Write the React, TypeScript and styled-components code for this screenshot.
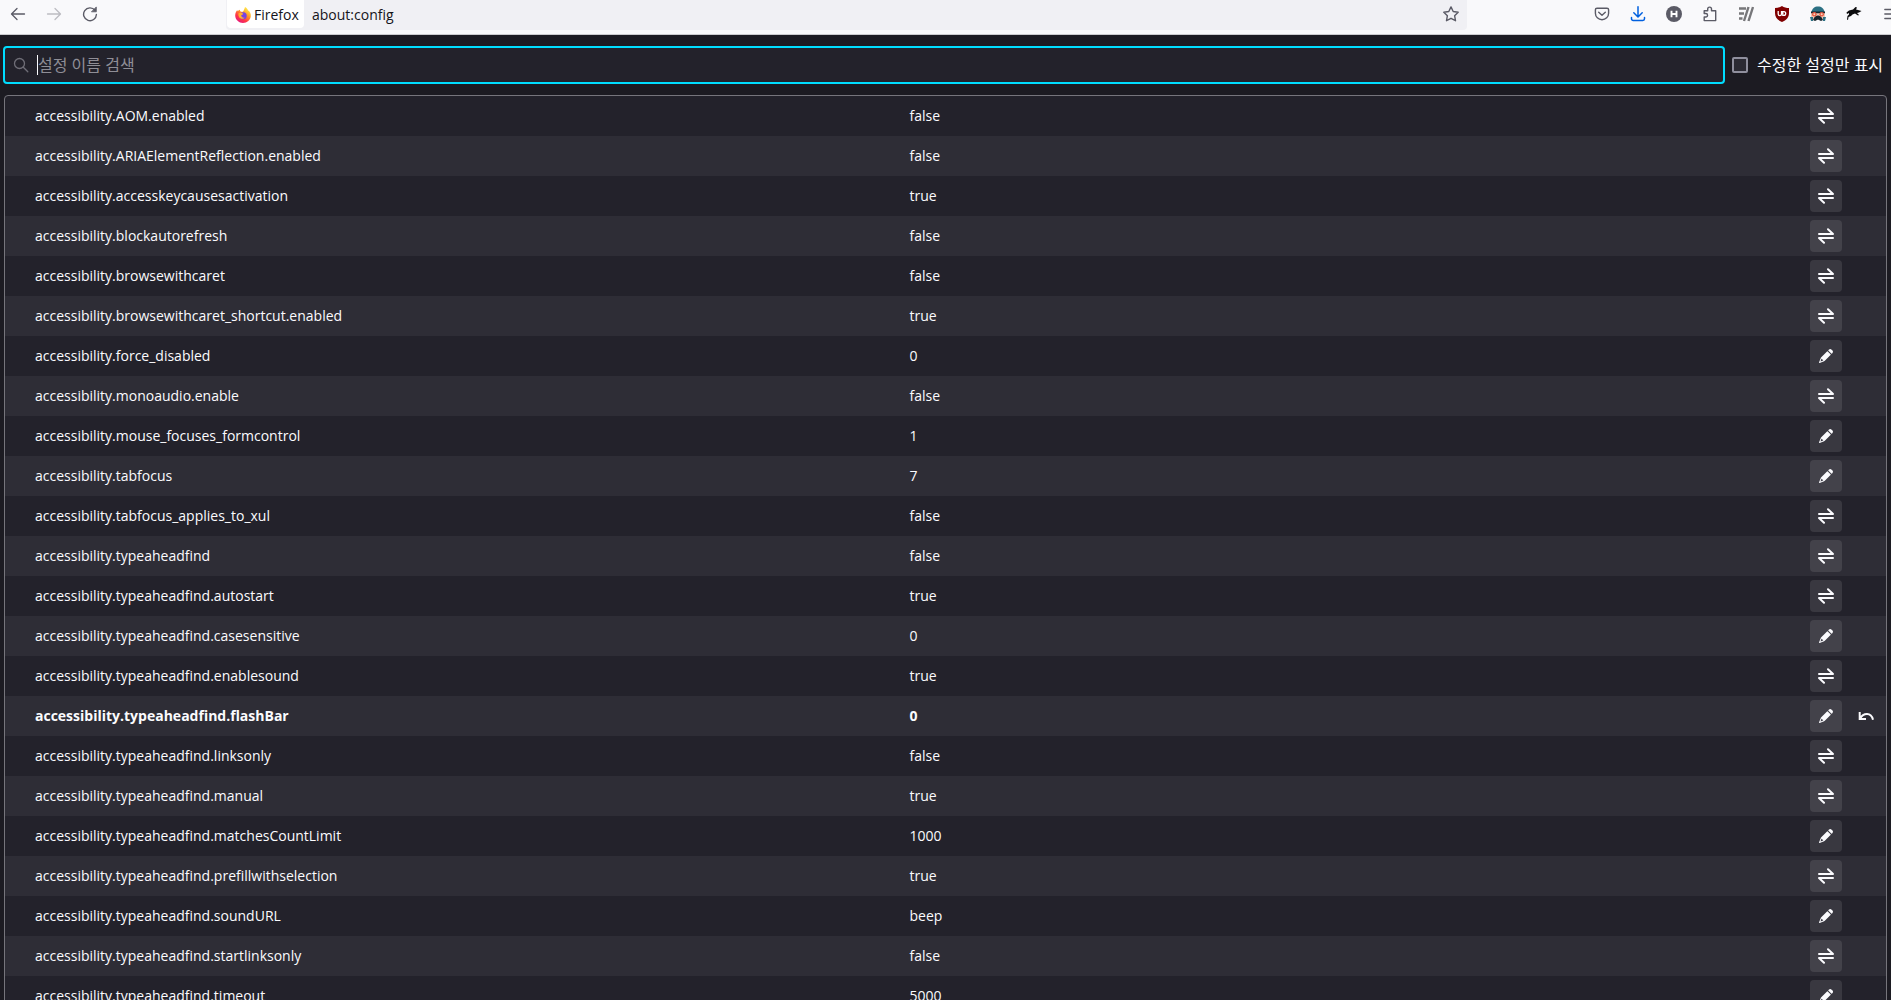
import React, { useState } from "react";
import styled, { createGlobalStyle } from "styled-components";

const GlobalStyle = createGlobalStyle`
  * { box-sizing: border-box; }
  body {
    margin: 0;
    background: #1c1b22;
    font-family: "Open Sans", "Noto Sans CJK KR", sans-serif;
  }
`;

const Page = styled.div`
  height: 100vh;
  overflow: hidden;
  color: #fbfbfe;
`;

const Toolbar = styled.header`
  display: flex;
  align-items: flex-start;
  height: 35px;
  background: #f9f9fb;
  border-bottom: 1px solid #cccccf;
  color: #5b5b66;
`;

const ToolGroup = styled.div`
  display: flex;
  flex: none;
`;

const ToolButton = styled.button<{ $color?: string }>`
  display: flex;
  align-items: center;
  justify-content: center;
  width: 36px;
  height: 28px;
  padding: 0;
  border: 0;
  background: none;
  color: ${(p) => p.$color ?? "inherit"};
  svg { display: block; flex: none; }
`;

const StarButton = styled(ToolButton)`
  width: 32px;
`;

const MenuButton = styled(ToolButton)`
  width: 19px;
  padding-left: 12px;
  justify-content: flex-start;
  overflow: hidden;
`;

const UrlBar = styled.div`
  display: flex;
  flex: 1;
  height: 30px;
  margin: 0 117px 0 118px;
  padding: 0 0 2px 1px;
  background: #f0f0f4;
  border-radius: 0 0 4px 4px;
`;

const Identity = styled.button`
  display: flex;
  align-items: center;
  gap: 3px;
  width: 77px;
  padding: 2px 0 0 8px;
  border: 0;
  border-radius: 0 0 4px 4px;
  background: #fff;
  color: #15141a;
  font: 14px/20px "Open Sans", sans-serif;
`;

const UrlInput = styled.input`
  flex: 1;
  min-width: 0;
  padding: 2px 0 0 8px;
  border: 0;
  outline: 0;
  background: none;
  color: #15141a;
  font: 14px/20px "Open Sans", sans-serif;
`;

const SearchRow = styled.div`
  display: flex;
  align-items: center;
  padding: 11px 4px 11px 3px;
`;

const SearchBox = styled.label`
  display: flex;
  align-items: center;
  flex: 1;
  height: 38px;
  padding-left: 8px;
  border: 2px solid #00ddff;
  border-radius: 4px;
  background: #23222b;
  color: #6f6e77;
`;

const Caret = styled.span`
  width: 1px;
  height: 20px;
  margin-left: 8px;
  background: #fbfbfe;
`;

const SearchInput = styled.input`
  flex: 1;
  min-width: 0;
  padding: 0;
  border: 0;
  outline: 0;
  background: none;
  color: #fbfbfe;
  font: 16px/24px "Open Sans", "Noto Sans CJK KR", sans-serif;
  &::placeholder { color: #8f8e96; opacity: 1; }
`;

const OnlyModified = styled.label`
  display: flex;
  align-items: center;
  gap: 9px;
  min-width: 155px;
  margin-left: 7px;
  font-size: 16px;
  line-height: 24px;
  white-space: nowrap;
`;

const Checkbox = styled.input`
  appearance: none;
  flex: none;
  width: 16px;
  height: 16px;
  margin: 0;
  border: 2px solid #8f8f9d;
  border-radius: 2px;
  background: #2b2a33;
  &:checked { background: #00ddff; }
`;

const TableFrame = styled.main`
  margin: 0 4px;
  border: 1px solid #76757c;
  border-radius: 4px;
  background: #23222b;
  overflow: hidden;
`;

const PrefTable = styled.table`
  width: 100%;
  table-layout: fixed;
  border-collapse: collapse;
  font-size: 14px;
  line-height: 20px;
`;

const ActionCol = styled.col`
  width: 40px;
`;

const PrefRow = styled.tr<{ $modified?: boolean }>`
  height: 40px;
  font-weight: ${(p) => (p.$modified ? 700 : 400)};
  &:nth-child(even) { background: #2e2d36; }
`;

const NameCell = styled.th`
  padding: 0 4px 0 30px;
  text-align: left;
  font-weight: inherit;
`;

const Cell = styled.td`
  padding: 0 4px;
`;

const RowButton = styled.button<{ $ghost?: boolean }>`
  display: flex;
  align-items: center;
  justify-content: center;
  width: 32px;
  height: 32px;
  padding: 0;
  border: 0;
  border-radius: 4px;
  background: ${(p) => (p.$ghost ? "transparent" : "rgba(251, 251, 254, 0.1)")};
  color: #fbfbfe;
`;

const line = { fill: "none", stroke: "currentColor", strokeLinecap: "round", strokeLinejoin: "round" } as const;

const ToggleIcon = () => (
  <svg width="16" height="16" viewBox="0 0 16 16" {...line} strokeWidth="2">
    <path d="M1 6h14L10 1.200M15 10H1l5 4.800" />
  </svg>
);
const EditIcon = () => (
  <svg width="16" height="16" viewBox="0 0 16 16" fill="currentColor">
    <path d="M14.354 2.353l-.708-.707a2.007 2.007 0 0 0-2.828 0l-.379.379a.5.5 0 0 0 0 .707l2.829 2.829a.5.5 0 0 0 .707 0l.379-.379a2.008 2.008 0 0 0 0-2.829zM9.732 3.439a.5.5 0 0 0-.707 0L3.246 9.218a1.986 1.986 0 0 0-.452.712l-1.756 4.39A.5.5 0 0 0 1.5 15a.49.49 0 0 0 .188-.037l4.382-1.752a1.966 1.966 0 0 0 .716-.454l5.779-5.778a.5.5 0 0 0 0-.707zM5.161 12.5l-2.549 1.02a.1.1 0 0 1-.13-.13L3.5 10.839a.1.1 0 0 1 .164-.033l1.53 1.53a.1.1 0 0 1-.033.164z" />
  </svg>
);
const ResetIcon = () => (
  <svg width="16" height="16" viewBox="0 0 16 16" fill="none" stroke="currentColor" strokeWidth="2">
    <path d="M1.700 4v7H8M2.200 10.500C5 5.200 13 3.500 15 11.800" />
  </svg>
);
const BackIcon = () => (
  <svg width="16" height="16" viewBox="0 0 16 16" {...line} strokeWidth="1.3">
    <path d="M14.500 8H1.800M7 2.500 1.500 8 7 13.500" />
  </svg>
);
const ForwardIcon = () => (
  <svg width="16" height="16" viewBox="0 0 16 16" {...line} strokeWidth="1.3">
    <path d="M1.500 8h12.700M9 2.500 14.500 8 9 13.500" />
  </svg>
);
const ReloadIcon = () => (
  <svg width="16" height="16" viewBox="0 0 16 16" {...line} strokeWidth="1.4">
    <path d="M13 4.300A6.400 6.400 0 1 0 14.400 8.500" />
    <path d="M14.300 1.300v4.500H9.800z" fill="currentColor" strokeWidth=".8" />
  </svg>
);
const FirefoxIcon = () => (
  <svg width="16" height="16" viewBox="0 0 16 16">
    <defs>
      <linearGradient id="flame" x1="0.85" y1="0" x2="0.2" y2="1">
        <stop offset="0.05" stopColor="#fff44f" />
        <stop offset="0.4" stopColor="#ff9a26" />
        <stop offset="0.7" stopColor="#ff3647" />
        <stop offset="1" stopColor="#e31587" />
      </linearGradient>
    </defs>
    <path fill="url(#flame)" d="M10 0c2 1 2.700 2.300 2.900 3.300C15 4.600 16 6.500 15.800 9 15.500 13 12 16 8 16S.2 12.700.2 8.500C.2 6 1.300 4.200 2.300 3c0 .6.200 1 .4 1.300C3.400 3.500 4.200 3 5 2.800c-.2.900.2 1.500.9 1.900h2C8.600 3.800 9.500 2.200 10 0z" />
    <circle cx="8.200" cy="8.700" r="3.500" fill="#7542e5" />
    <path fill="#ffb02e" d="M3.500 6.200c1.700-1 3.400-.6 4.800.5-.2.900-1.600 1-2.100 1.600 0 2 2 3 3.700 2.300-1.300 1.700-4.700 1.700-5.900-.6-.6-1.200-.8-2.500-.5-3.800z" />
  </svg>
);
const SearchIcon = () => (
  <svg width="16" height="16" viewBox="0 0 16 16" {...line} strokeWidth="1.3">
    <circle cx="6.500" cy="6.500" r="5" />
    <path d="m10.300 10.300 4.500 4.500" />
  </svg>
);
const StarIcon = () => (
  <svg width="16" height="16" viewBox="0 0 16 16" {...line} strokeWidth="1.4">
    <path d="m8 .9 2.200 4.600 5 .7-3.600 3.500.9 5L8 12.300l-4.500 2.400.9-5L.8 6.200l5-.7z" />
  </svg>
);
const PocketIcon = () => (
  <svg width="16" height="16" viewBox="0 0 16 16" {...line} strokeWidth="1.400">
    <path d="M3 2.200h10a1.600 1.600 0 0 1 1.600 1.600V7.200a6.600 6.600 0 0 1-13.200 0V3.800A1.600 1.600 0 0 1 3 2.200z" />
    <path d="m4.700 6.300 3.300 3 3.300-3" />
  </svg>
);
const DownloadIcon = () => (
  <svg width="16" height="16" viewBox="0 0 16 16" {...line} strokeWidth="1.500">
    <path d="M8 .8v10M3.800 6.800 8 11l4.200-4.200M1.500 11.500v1.300A1.700 1.700 0 0 0 3.200 14.500h9.600a1.700 1.700 0 0 0 1.700-1.700v-1.300" />
  </svg>
);
const AccountIcon = () => (
  <svg width="16" height="16" viewBox="0 0 16 16">
    <circle cx="8" cy="8" r="8" fill="#5b5b66" />
    <path d="M5.500 4.700v6.600M10.500 4.700v6.600M5.500 8h5" stroke="#fff" strokeWidth="1.900" />
  </svg>
);
const ExtensionsIcon = () => (
  <svg width="16" height="16" viewBox="0 0 16 16" {...line} strokeWidth="1.400">
    <path d="M2.200 14.600V11h1.600a1.700 1.700 0 0 0 0-3.500H2.200V4.700h3.500V3a1.900 1.900 0 0 1 3.800 0v1.700h4.200v9.900z" />
  </svg>
);
const SlashesIcon = () => (
  <svg width="16" height="16" viewBox="0 0 16 16" fill="none" stroke="#77777a" strokeWidth="2.400">
    <path d="M1 2.500h7M1 7.500h5M1 12.500h3.500M10.500 1 6 15M15 1l-4.500 14" />
  </svg>
);
const ShieldIcon = () => (
  <svg width="16" height="16" viewBox="0 0 16 16">
    <path fill="#800000" d="M8 0c2 1.400 4.500 2 7 2v5c0 4.500-2.500 7-7 9-4.500-2-7-4.500-7-9V2c2.500 0 5-.6 7-2z" />
    <path fill="none" stroke="#fff" strokeWidth="1.300" d="M4.200 5v3c0 2.200 3.300 2.200 3.300 0V5M8.800 5.600v3.800h1a1.900 1.900 0 0 0 0-3.800z" />
  </svg>
);
const FaceIcon = () => (
  <svg width="16" height="16" viewBox="0 0 16 16">
    <path fill="#f1c7b5" d="M1 6h14v5l-2 3H3l-2-3z" />
    <path fill="#2c7184" d="M1.500 6C2 2.500 4.500.5 8 .5s6 2 6.500 5.500z" />
    <path fill="#17252c" d="M1 5.500h14v1.700H1zM3 14c1.500-3.500 3-4.500 5-4.500s3.500 1 5 4.500l-2 1-3-1.500L5 15z" />
    <circle cx="4.300" cy="8.200" r="2.300" fill="#e85b43" />
    <circle cx="11.700" cy="8.200" r="2.300" fill="#e85b43" />
    <circle cx="4.300" cy="8.200" r="1" fill="#f9d3bf" />
    <circle cx="11.700" cy="8.200" r="1" fill="#f9d3bf" />
    <path fill="#2c7184" d="M0 11h3v4H1zM13 11h3l-1 4h-2z" />
  </svg>
);
const LeaperIcon = () => (
  <svg width="16" height="16" viewBox="0 0 16 16" fill="#0b0b0d">
    <path d="M.5 6.500 3 4.500 7 3.500 9.500 1 11 1.500l-1 2 2 .5 3.500 1-2.500 1.500-2 .5 2 2-1 .5-3-2L6.500 8.500 5 10l-2.500 1L2 14l-1-.5.500-3.500L3 8.500V7L1 8z" />
  </svg>
);
const MenuIcon = () => (
  <svg width="14" height="16" viewBox="0 0 14 16" {...line} strokeWidth="1.300">
    <path d="M.8 3.500h12.400M.8 8h12.400M.8 12.500h12.400" />
  </svg>
);

const extensions = [
  { label: "Pocket", Icon: PocketIcon },
  { label: "Downloads", Icon: DownloadIcon, color: "#0060df" },
  { label: "Account", Icon: AccountIcon },
  { label: "Extensions", Icon: ExtensionsIcon },
  { label: "Reader", Icon: SlashesIcon },
  { label: "Blocker", Icon: ShieldIcon },
  { label: "Avatar", Icon: FaceIcon },
  { label: "Leaper", Icon: LeaperIcon },
];

type Pref = { name: string; value: string; modified?: boolean };

const prefs: Pref[] = [
  { name: "accessibility.AOM.enabled", value: "false" },
  { name: "accessibility.ARIAElementReflection.enabled", value: "false" },
  { name: "accessibility.accesskeycausesactivation", value: "true" },
  { name: "accessibility.blockautorefresh", value: "false" },
  { name: "accessibility.browsewithcaret", value: "false" },
  { name: "accessibility.browsewithcaret_shortcut.enabled", value: "true" },
  { name: "accessibility.force_disabled", value: "0" },
  { name: "accessibility.monoaudio.enable", value: "false" },
  { name: "accessibility.mouse_focuses_formcontrol", value: "1" },
  { name: "accessibility.tabfocus", value: "7" },
  { name: "accessibility.tabfocus_applies_to_xul", value: "false" },
  { name: "accessibility.typeaheadfind", value: "false" },
  { name: "accessibility.typeaheadfind.autostart", value: "true" },
  { name: "accessibility.typeaheadfind.casesensitive", value: "0" },
  { name: "accessibility.typeaheadfind.enablesound", value: "true" },
  { name: "accessibility.typeaheadfind.flashBar", value: "0", modified: true },
  { name: "accessibility.typeaheadfind.linksonly", value: "false" },
  { name: "accessibility.typeaheadfind.manual", value: "true" },
  { name: "accessibility.typeaheadfind.matchesCountLimit", value: "1000" },
  { name: "accessibility.typeaheadfind.prefillwithselection", value: "true" },
  { name: "accessibility.typeaheadfind.soundURL", value: "beep" },
  { name: "accessibility.typeaheadfind.startlinksonly", value: "false" },
  { name: "accessibility.typeaheadfind.timeout", value: "5000" },
];

const isBoolean = (value: string) => value === "true" || value === "false";

export default function App() {
  const [query, setQuery] = useState("");
  const [onlyModified, setOnlyModified] = useState(false);
  const shown = prefs.filter((p) => p.name.includes(query) && (!onlyModified || p.modified));

  return (
    <Page>
      <GlobalStyle />
      <Toolbar>
        <ToolGroup>
          <ToolButton aria-label="Back"><BackIcon /></ToolButton>
          <ToolButton aria-label="Forward" $color="#bdbdc2"><ForwardIcon /></ToolButton>
          <ToolButton aria-label="Reload"><ReloadIcon /></ToolButton>
        </ToolGroup>
        <UrlBar>
          <Identity><FirefoxIcon />Firefox</Identity>
          <UrlInput aria-label="Address" defaultValue="about:config" />
          <StarButton aria-label="Bookmark"><StarIcon /></StarButton>
        </UrlBar>
        <ToolGroup>
          {extensions.map(({ label, Icon, color }) => (
            <ToolButton key={label} aria-label={label} $color={color}><Icon /></ToolButton>
          ))}
          <MenuButton aria-label="Menu"><MenuIcon /></MenuButton>
        </ToolGroup>
      </Toolbar>

      <SearchRow>
        <SearchBox>
          <SearchIcon />
          <Caret />
          <SearchInput
            aria-label="설정 이름 검색"
            placeholder="설정 이름 검색"
            value={query}
            onChange={(e) => setQuery(e.target.value)}
          />
        </SearchBox>
        <OnlyModified>
          <Checkbox type="checkbox" checked={onlyModified} onChange={(e) => setOnlyModified(e.target.checked)} />
          수정한 설정만 표시
        </OnlyModified>
      </SearchRow>

      <TableFrame>
        <PrefTable>
          <colgroup>
            <col />
            <col />
            <ActionCol />
            <ActionCol />
          </colgroup>
          <tbody>
            {shown.map((p) => (
              <PrefRow key={p.name} $modified={p.modified}>
                <NameCell scope="row">{p.name}</NameCell>
                <Cell>{p.value}</Cell>
                <Cell>
                  <RowButton aria-label={isBoolean(p.value) ? "Toggle" : "Edit"}>
                    {isBoolean(p.value) ? <ToggleIcon /> : <EditIcon />}
                  </RowButton>
                </Cell>
                <Cell>
                  {p.modified && <RowButton $ghost aria-label="Reset"><ResetIcon /></RowButton>}
                </Cell>
              </PrefRow>
            ))}
          </tbody>
        </PrefTable>
      </TableFrame>
    </Page>
  );
}
